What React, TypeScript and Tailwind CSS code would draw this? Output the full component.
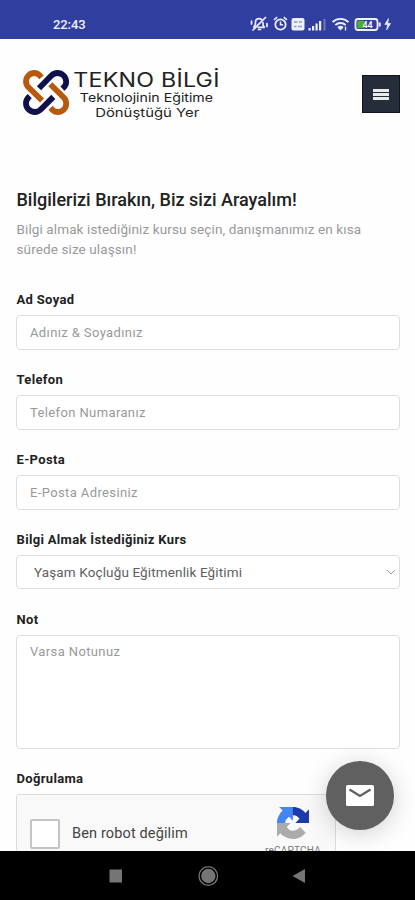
import React from 'react';

const fields = [
  { label: 'Ad Soyad', placeholder: 'Adınız & Soyadınız' },
  { label: 'Telefon', placeholder: 'Telefon Numaranız' },
  { label: 'E-Posta', placeholder: 'E-Posta Adresiniz' },
];

function StatusIcons() {
  return (
    <svg className="h-[18px] w-[144px]" viewBox="0 0 144 18" fill="none" stroke="#eef0ff">
      {/* muted bell */}
      <g strokeWidth="1.7" strokeLinecap="round" strokeLinejoin="round">
        <path d="M5 12.5l-1.2-.5 1.6-2.2V7.5c0-2.3 1.7-3.8 3.8-3.8 1 0 1.8.3 2.5.9M13 7.5v2.6l1.3 2.2H8M8.5 14.5h2" />
        <path d="M3 15L15.5 2.5M1.5 6v3M17 8.5v3" />
      </g>
      {/* alarm */}
      <circle cx="30.5" cy="9.5" r="5.2" strokeWidth="1.8" />
      <path d="M30.5 6.5v3.3h2.6M24 4.8l3.2-2.6M37 4.8l-3.2-2.6" strokeWidth="1.5" />
      {/* VoLTE */}
      <rect x="41.5" y="3" width="13" height="12.5" rx="2" fill="#eef0ff" stroke="none" />
      <path d="M44 7h3.5M49 7h3M44 11.5h2.5M48 11.5h4" stroke="#8f97d0" strokeWidth="1.6" />
      {/* signal */}
      <g fill="#eef0ff" stroke="none">
        <rect x="58.5" y="13" width="2.2" height="2.5" />
        <rect x="62" y="11" width="2.2" height="4.5" />
        <rect x="65.5" y="8.5" width="2.2" height="7" />
        <rect x="69" y="6" width="2.2" height="9.5" />
        <rect x="73.5" y="4" width="2" height="11.5" fill="#6d79c2" />
      </g>
      {/* wifi */}
      <path d="M82.5 7c4.8-4.2 11.2-4.2 16 0M85.3 10c3-2.6 7.4-2.6 10.4 0M88 12.7c1.5-1.2 3.5-1.2 5 0" strokeWidth="1.9" />
      <path d="M88.2 13h4.6l-2.3 2.6z" fill="#eef0ff" stroke="none" />
      <path d="M95.5 11.5v4" strokeWidth="1.3" />
      {/* battery */}
      <rect x="105.5" y="4" width="22" height="11" rx="2.5" strokeWidth="1.8" />
      <rect x="107.3" y="5.7" width="7" height="7.6" fill="#4dae27" stroke="none" />
      <path d="M129.7 7.5v4" strokeWidth="2" />
      <text x="117.5" y="12.7" textAnchor="middle" fill="#fff" stroke="none" fontSize="9" fontWeight="500" fontFamily="Roboto, sans-serif">44</text>
      <path d="M138.5 3.5L134.8 9.5h2.8l-1 5.5 4-6.5h-2.8z" fill="#eef0ff" stroke="#eef0ff" strokeWidth="0.6" />
    </svg>
  );
}

function Logo() {
  return (
    <div className="flex">
      <svg className="h-[48px] w-[50px]" viewBox="21 69 50 48" fill="none" strokeWidth="5.8">
        <path d="M41.5 77.4l-1.4-1.6C38.5 74 36.7 73 34.4 73a8.4 8.4 0 0 0-8.4 8.4c0 2.4 1 4.4 2.7 6.1L42 100.5" stroke="#b85a0d" />
        <path d="M50.3 84.3L63.5 97.3c1.8 1.8 2.7 3.7 2.7 6.1a8.4 8.4 0 0 1-8.4 8.6c-2.3 0-4.1-.9-5.7-2.6l-1.5-1.6" stroke="#b85a0d" />
        <path d="M39 88.2L51.2 75.8c1.8-1.8 3.8-2.8 6.2-2.8a8.8 8.8 0 0 1 8.8 8.7c0 2.3-1 4.2-2.5 5.7l-1.3 1.2" stroke="#10114a" />
        <path d="M29.8 96.2l-1.3 1.2c-1.5 1.5-2.5 3.5-2.5 5.8a8.8 8.8 0 0 0 8.8 8.8c2.4 0 4.4-1 6.2-2.8l12.3-12.3" stroke="#10114a" />
      </svg>
      <div className="ml-[3px] flex w-[144px] flex-col items-center whitespace-nowrap font-[Inter,sans-serif] text-[#222]">
        <span className="h-[22px] origin-center scale-x-[1.19] text-[19.5px] leading-[22px] tracking-[0.2px]">TEKNO BİLGİ</span>
        <span className="h-[14px] origin-center scale-x-[1.18] text-[12px] leading-[14px]">Teknolojinin Eğitime</span>
        <span className="mt-px h-[14px] origin-center scale-x-[1.24] pl-[2px] text-[12px] leading-[14px]">Dönüştüğü Yer</span>
      </div>
    </div>
  );
}

function RecaptchaLogo() {
  return (
    <svg className="h-8 w-8" viewBox="0 0 64 64">
      <path d="M64 31.955l-.033-1.37V4.687l-7.16 7.16C50.948 4.674 42.033.093 32.05.093c-10.4 0-19.622 4.96-25.458 12.64l11.736 11.86a15.55 15.55 0 0 1 4.754-5.334c2.05-1.6 4.952-2.906 8.968-2.906.485 0 .86.057 1.135.163 4.976.393 9.288 3.14 11.828 7.124l-8.307 8.307L64 31.953" fill="#1c3aa9" />
      <path d="M31.862.094l-1.37.033H4.594l7.16 7.16C4.58 13.147 0 22.06 0 32.046c0 10.4 4.96 19.622 12.64 25.458L24.5 45.768a15.55 15.55 0 0 1-5.334-4.754c-1.6-2.05-2.906-4.952-2.906-8.968 0-.485.057-.86.163-1.135.393-4.976 3.14-9.288 7.124-11.828l8.307 8.307L31.86.095" fill="#4285f4" />
      <path d="M.001 32.045l.033 1.37v25.898l7.16-7.16c5.86 7.173 14.774 11.754 24.76 11.754 10.4 0 19.622-4.96 25.458-12.64l-11.736-11.86a15.55 15.55 0 0 1-4.754 5.334c-2.05 1.6-4.952 2.906-8.968 2.906-.485 0-.86-.057-1.135-.163-4.976-.393-9.288-3.14-11.828-7.124l8.307-8.307c-10.522.04-22.4.066-27.295-.005" fill="#ababab" />
    </svg>
  );
}

function Label({ children }: { children: React.ReactNode }) {
  return <label className="block h-5 pl-[0.5px] text-[13px] leading-5 font-bold tracking-[0.33px] text-[#222]">{children}</label>;
}

export default function App() {
  return (
    <div className="relative flex h-[900px] w-[415px] flex-col overflow-hidden bg-[#fefefe] font-[Roboto,sans-serif]">
      <div className="flex h-[39px] shrink-0 justify-between bg-[#303f9f] pt-[15px] pr-[21px] pl-[53px]">
        <span className="text-[13px] leading-[19px] font-medium tracking-[-0.1px] text-[#eef0ff]">22:43</span>
        <StatusIcons />
      </div>

      <header className="flex h-[151px] shrink-0 items-start justify-between pt-[30px] pr-[15px] pl-[21px]">
        <Logo />
        <button className="mt-[6px] flex h-[38px] w-[38px] flex-col items-center justify-center gap-px border border-[#10151f] bg-[#252d3b]">
          <span className="h-[3px] w-4 bg-[#e8eaeb]" />
          <span className="h-[3px] w-4 bg-[#e8eaeb]" />
          <span className="h-[3px] w-4 bg-[#e8eaeb]" />
        </button>
      </header>

      <main className="flex min-h-0 flex-1 flex-col overflow-hidden pr-[15px] pl-4">
        <h1 className="h-[29px] shrink-0 pl-[0.5px] text-[18px] leading-5 font-medium whitespace-nowrap text-[#222]">Bilgilerizi Bırakın, Biz sizi Arayalım!</h1>
        <p className="h-[71px] shrink-0 pl-[0.5px] text-[13.5px] leading-5 tracking-[0.11px] whitespace-nowrap text-[#999]">
          Bilgi almak istediğiniz kursu seçin, danışmanımız en kısa<br />sürede size ulaşsın!
        </p>
        <form className="flex shrink-0 flex-col gap-[21px]">
          {fields.map((f) => (
            <div key={f.label}>
              <Label>{f.label}</Label>
              <input className="mt-[5px] -mb-px block h-[35px] w-full rounded-[4px] border border-[#dedede] bg-white px-[13px] text-[13px] tracking-[0.38px] placeholder:text-[#999]" placeholder={f.placeholder} />
            </div>
          ))}
          <div>
            <Label>Bilgi Almak İstediğiniz Kurs</Label>
            <div className="mt-[5px] -mb-px flex h-[34px] items-center justify-between rounded-[4px] border border-[#dedede] bg-white pr-[3px] pl-[17px] text-[13.5px] tracking-[0.13px] text-[#606060]">
              Yaşam Koçluğu Eğitmenlik Eğitimi
              <svg className="h-[6px] w-[10px]" viewBox="0 0 10 6" fill="none" stroke="#999"><path d="M1 1l4 4 4-4" /></svg>
            </div>
          </div>
          <div className="mt-px">
            <Label>Not</Label>
            <textarea className="mt-[5px] -mb-px block h-[114px] w-full resize-none rounded-[4px] border border-[#dedede] bg-white px-[13px] py-[6px] text-[13px] leading-5 tracking-[0.38px] placeholder:text-[#999]" placeholder="Varsa Notunuz" />
          </div>
          <div>
            <Label>Doğrulama</Label>
            <div className="mt-[5px] flex h-[78px] w-[320px] items-start justify-between rounded-[3px] border border-[#dcdcdc] bg-[#f9f9f9] pl-[13px]">
              <div className="mt-6 flex items-center">
                <span className="h-[30px] w-[30px] rounded-[2px] border-2 border-[#c4c4c4] bg-white" />
                <span className="ml-3 text-[14.5px] tracking-[0.14px] text-[#444]">Ben robot değilim</span>
              </div>
              <div className="mt-[12px] mr-[12px] flex w-[60px] flex-col items-center">
                <RecaptchaLogo />
                <span className="mt-[6px] text-[10px] leading-3 tracking-[0.2px] text-[#777]">reCAPTCHA</span>
              </div>
            </div>
          </div>
        </form>
      </main>

      <nav className="flex h-[49px] shrink-0 items-center justify-center bg-black">
        <svg className="h-6 w-[210px]" viewBox="0 0 210 24" fill="#757575">
          <rect x="6.5" y="5.5" width="12.5" height="13" />
          <circle cx="105.3" cy="12" r="7.2" />
          <circle cx="105.3" cy="12" r="9.3" fill="none" stroke="#757575" strokeWidth="1.3" />
          <path d="M189.5 12L202 5v14z" />
        </svg>
      </nav>

      <button className="absolute top-[761px] left-[326px] flex h-[69px] w-[68px] items-center justify-center rounded-full bg-[#606060] shadow-[0_4px_24px_rgba(0,0,0,0.18)]">
        <svg className="h-[21px] w-[28px]" viewBox="0 0 28 21">
          <rect width="28" height="21" rx="1.5" fill="#fff" />
          <path d="M3.5 4.5L14 11 24.5 4.5" fill="none" stroke="#606060" strokeWidth="2.3" />
        </svg>
      </button>
    </div>
  );
}
